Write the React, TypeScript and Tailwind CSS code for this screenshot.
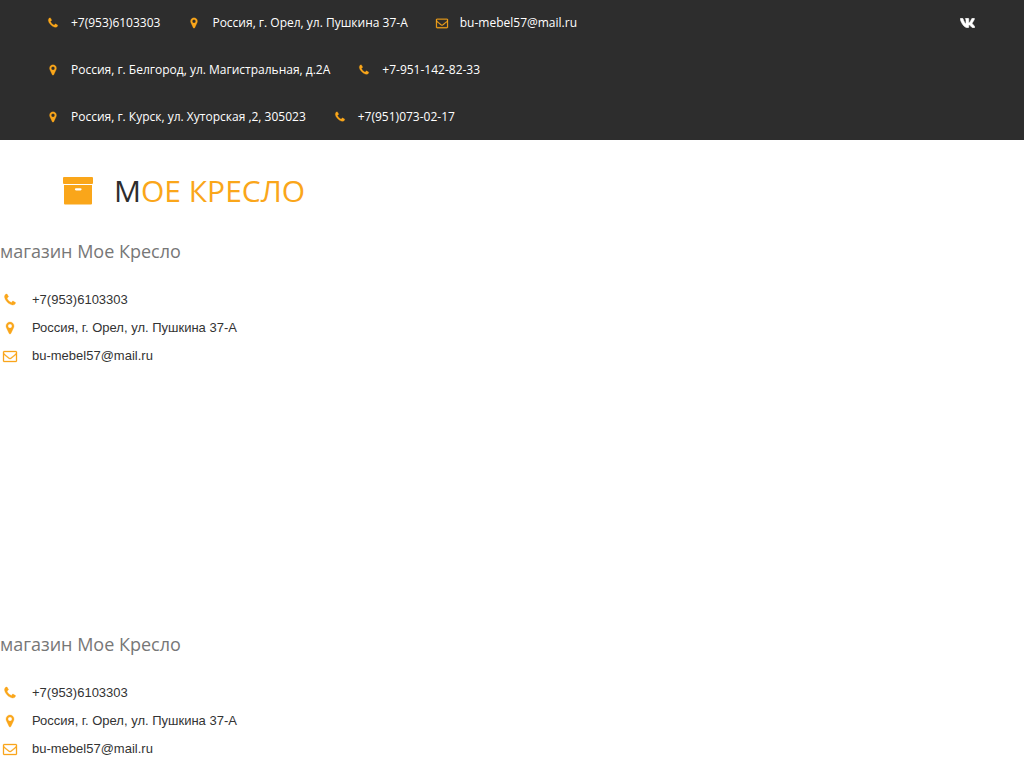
import type { ReactNode } from 'react';

type Kind = 'phone' | 'marker' | 'mail';

const paths: Record<Kind, string> = {
  phone:
    'M1600 1240q0 27-10 70.5t-21 68.5q-21 50-122 106-94 51-186 51-27 0-53-3.5t-57.5-12.5-47-14.5-55.5-20.5-49-18q-98-35-175-83-127-79-264-216t-216-264q-48-77-83-175-3-9-18-49t-20.5-55.5-14.5-47-12.5-57.5-3.5-53q0-92 51-186 56-101 106-122 25-11 68.5-21t70.5-10q14 0 21 3 18 6 53 76 11 19 30 54t35 63.5 31 53.5q3 4 17.5 25t21.5 35.5 7 28.5q0 20-28.5 50t-62 55-62 53-28.5 46q0 9 5 22.5t8.5 20.5 14 24 11.5 19q76 137 174 235t235 174q2 1 19 11.5t24 14 20.5 8.5 22.5 5q18 0 46-28.5t53-62 55-62 50-28.5q14 0 28.5 7t35.5 21.5 25 17.5q25 15 53.5 31t63.5 35 54 30q70 35 76 53 3 7 3 21z',
  marker:
    'M1152 640q0-106-75-181t-181-75-181 75-75 181 75 181 181 75 181-75 75-181zm256 0q0 109-33 179l-364 774q-16 33-47.5 52t-67.5 19-67.5-19-46.5-52l-365-774q-33-70-33-179 0-212 150-362t362-150 362 150 150 362z',
  mail:
    'M1664 1504v-768q-32 36-69 66-268 206-426 338-51 43-83 67t-86.5 48.5-102.5 24.5h-2q-48 0-102.5-24.5t-86.5-48.5-83-67q-158-132-426-338-37-30-69-66v768q0 13 9.5 22.5t22.5 9.5h1472q13 0 22.5-9.5t9.5-22.5zm0-1051v-24.5l-.5-13-3-12.5-5.5-9-9-7.5-14-2.5h-1472q-13 0-22.5 9.5t-9.5 22.5q0 168 147 284 193 152 401 317 6 5 35 29.5t46 37.5 44.5 31.5 50.5 27.5 43 9h2q20 0 43-9t50.5-27.5 44.5-31.5 46-37.5 35-29.5q208-165 401-317 54-43 100.500-115.500t46.500-131.500zm128-37v1088q0 66-47 113t-113 47h-1472q-66 0-113-47t-47-113v-1088q0-66 47-113t113-47h1472q66 0 113 47t47 113z',
};

function Icon({ kind, className }: { kind: Kind; className: string }) {
  return (
    <svg viewBox="0 0 1792 1792" fill="currentColor" stroke="currentColor" strokeWidth="40" aria-hidden="true" className={`shrink-0 overflow-visible text-[#faa61a] ${className}`}>
      <path d={paths[kind]} />
    </svg>
  );
}

function VkIcon() {
  return (
    <svg viewBox="10 86 556 340" preserveAspectRatio="none" fill="currentColor" stroke="currentColor" strokeWidth="22" aria-hidden="true" className="h-2.5 w-[15px]">
      <path d="M545 117.700c3.700-12.500 0-21.700-17.800-21.700h-58.900c-15 0-21.900 7.900-25.600 16.700 0 0-30 73.100-72.400 120.500-13.700 13.700-20 18.100-27.500 18.100-3.700 0-9.400-4.400-9.400-16.900V117.700c0-15-4.200-21.700-16.600-21.700h-92.600c-9.400 0-15 7-15 13.500 0 14.200 21.200 17.500 23.400 57.500v86.800c0 19-3.400 22.500-10.900 22.500-20 0-68.600-73.400-97.400-157.400-5.800-16.300-11.500-22.900-26.600-22.900H38.800c-16.800 0-20.200 7.900-20.200 16.700 0 15.600 20 93.100 93.100 195.500C160.400 378.100 229 416 291.400 416c37.500 0 42.100-8.400 42.100-22.900 0-66.800-3.400-73.100 15.400-73.100 8.700 0 23.700 4.400 58.700 38.100 40 40 46.600 57.900 69 57.900h58.900c16.800 0 25.300-8.400 20.400-25-11.200-34.900-86.900-106.700-90.300-111.500-8.700-11.200-6.200-16.200 0-26.200.1-.1 72-101.300 79.400-135.600z" />
    </svg>
  );
}

function TopItem({ kind, children }: { kind: Kind; children: ReactNode }) {
  return (
    <li className="flex items-center gap-3">
      <Icon kind={kind} className="size-3" />
      <span>{children}</span>
    </li>
  );
}

function TopRow({ children }: { children: ReactNode }) {
  return <ul className="flex items-center gap-7">{children}</ul>;
}

function ShopContacts() {
  return (
    <section>
      <h2 className="font-['Open_Sans',sans-serif] text-lg leading-6 text-[#777777]">магазин Мое Кресло</h2>
      <ul className="mt-[23px] text-[13px] leading-7 text-[#333333]">
        <li className="flex items-center gap-[15px] pl-[3px]">
          <Icon kind="phone" className="size-3.5" />
          <a href="tel:+79536103303">+7(953)6103303</a>
        </li>
        <li className="flex items-center gap-[15px] pl-[3px]">
          <Icon kind="marker" className="size-3.5" />
          <span>Россия, г. Орел, ул. Пушкина 37-А</span>
        </li>
        <li className="flex items-center gap-[15px] pl-[3px]">
          <Icon kind="mail" className="size-3.5" />
          <a href="mailto:bu-mebel57@mail.ru">bu-mebel57@mail.ru</a>
        </li>
      </ul>
    </section>
  );
}

export default function App() {
  return (
    <div className="min-h-screen overflow-x-hidden bg-white font-['Liberation_Sans',Arial,sans-serif]">
      <header>
        <div className="flex items-start justify-between bg-[#2d2d2d] pr-[49px] pl-[47px] font-['Open_Sans',sans-serif] text-xs font-medium text-white">
          <div className="grid h-35 grid-rows-3">
            <TopRow>
              <TopItem kind="phone"><a href="tel:+79536103303">+7(953)6103303</a></TopItem>
              <TopItem kind="marker">Россия, г. Орел, ул. Пушкина 37-А</TopItem>
              <TopItem kind="mail"><a href="mailto:bu-mebel57@mail.ru">bu-mebel57@mail.ru</a></TopItem>
            </TopRow>
            <TopRow>
              <TopItem kind="marker">Россия, г. Белгород, ул. Магистральная, д.2А</TopItem>
              <TopItem kind="phone"><a href="tel:+79511428233">+7-951-142-82-33</a></TopItem>
            </TopRow>
            <TopRow>
              <TopItem kind="marker">Россия, г. Курск, ул. Хуторская ,2, 305023</TopItem>
              <TopItem kind="phone"><a href="tel:+79510730217">+7(951)073-02-17</a></TopItem>
            </TopRow>
          </div>
          <a href="#vk" aria-label="VK" className="pt-[18px]">
            <VkIcon />
          </a>
        </div>
        <a href="#home" className="flex items-center gap-[21px] pt-[31px] pb-7 pl-[63px]">
          <svg viewBox="0 0 30 28" fill="currentColor" aria-hidden="true" className="h-7 w-[30px] text-[#faa61a]">
            <rect x="0" y="0" width="30" height="7" rx="1" />
            <path fillRule="evenodd" d="M1 8h28v18.500q0 1-1 1H2q-1 0-1-1zM13 11.200a1 1 0 0 0 0 2.200h4.500a1 1 0 0 0 0-2.200z" />
          </svg>
          <span className="font-['Open_Sans',sans-serif] text-[30px] leading-10 text-[#faa61a]">
            <span className="text-[#2d2d2d]">М</span>ОЕ КРЕСЛО
          </span>
        </a>
      </header>
      <main className="flex flex-col gap-[262px]">
        <ShopContacts />
        <ShopContacts />
      </main>
    </div>
  );
}
